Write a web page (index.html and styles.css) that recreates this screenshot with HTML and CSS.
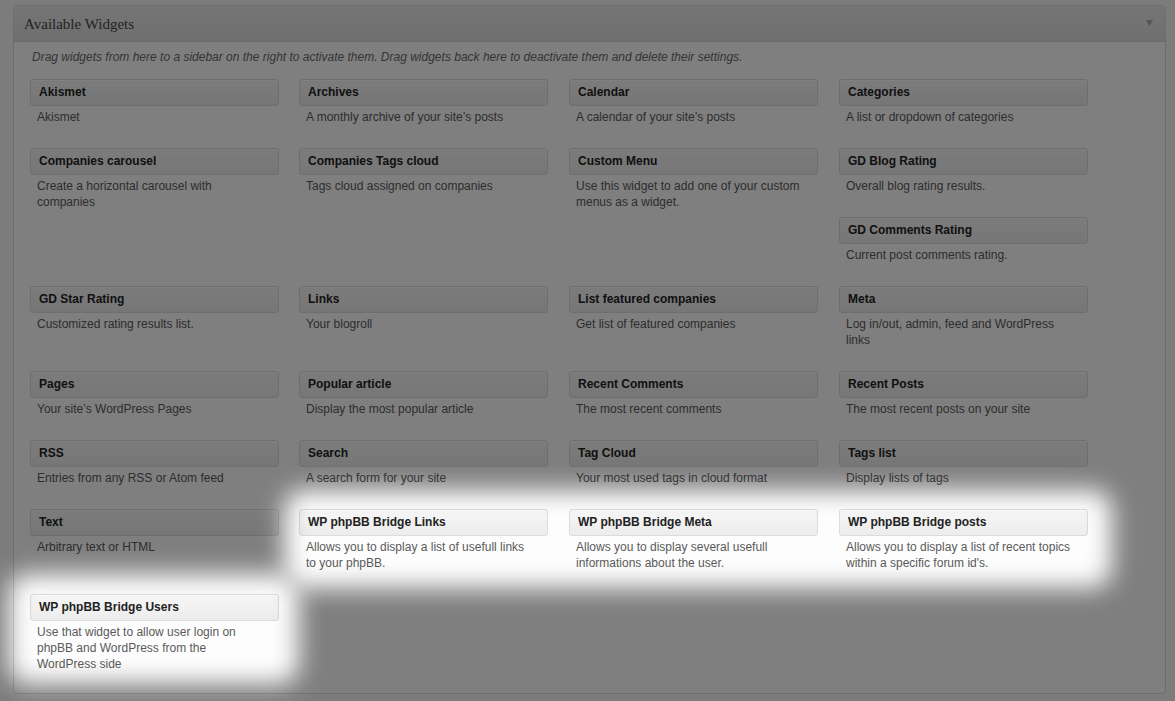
FILE: index.html
```html
<!DOCTYPE html>
<html>
<head>
<meta charset="utf-8">
<title>Widgets</title>
<link rel="stylesheet" href="styles.css">
</head>
<body>
<div class="page">
  <div class="panel">
    <div class="panel-head">
      <h3>Available Widgets</h3>
      <svg class="arrow" width="7" height="6" viewBox="0 0 7 6"><polygon points="0,0 7,0 3.5,6" fill="#a8a8a8"/></svg>
    </div>
    <div class="holder">
      <p class="intro">Drag widgets from here to a sidebar on the right to activate them. Drag widgets back here to deactivate them and delete their settings.</p>
      <div class="grid">
        <div class="widget"><div class="w-title">Akismet</div><div class="w-desc">Akismet</div></div>
        <div class="widget"><div class="w-title">Archives</div><div class="w-desc">A monthly archive of your site’s posts</div></div>
        <div class="widget"><div class="w-title">Calendar</div><div class="w-desc">A calendar of your site’s posts</div></div>
        <div class="widget"><div class="w-title">Categories</div><div class="w-desc">A list or dropdown of categories</div></div>

        <div class="widget"><div class="w-title">Companies carousel</div><div class="w-desc">Create a horizontal carousel with companies</div></div>
        <div class="widget"><div class="w-title">Companies Tags cloud</div><div class="w-desc">Tags cloud assigned on companies</div></div>
        <div class="widget"><div class="w-title">Custom Menu</div><div class="w-desc">Use this widget to add one of your custom menus as a widget.</div></div>
        <div class="stack">
          <div class="widget"><div class="w-title">GD Blog Rating</div><div class="w-desc">Overall blog rating results.</div></div>
          <div class="widget"><div class="w-title">GD Comments Rating</div><div class="w-desc">Current post comments rating.</div></div>
        </div>

        <div class="widget"><div class="w-title">GD Star Rating</div><div class="w-desc">Customized rating results list.</div></div>
        <div class="widget"><div class="w-title">Links</div><div class="w-desc">Your blogroll</div></div>
        <div class="widget"><div class="w-title">List featured companies</div><div class="w-desc">Get list of featured companies</div></div>
        <div class="widget"><div class="w-title">Meta</div><div class="w-desc">Log in/out, admin, feed and WordPress links</div></div>

        <div class="widget"><div class="w-title">Pages</div><div class="w-desc">Your site’s WordPress Pages</div></div>
        <div class="widget"><div class="w-title">Popular article</div><div class="w-desc">Display the most popular article</div></div>
        <div class="widget"><div class="w-title">Recent Comments</div><div class="w-desc">The most recent comments</div></div>
        <div class="widget"><div class="w-title">Recent Posts</div><div class="w-desc">The most recent posts on your site</div></div>

        <div class="widget"><div class="w-title">RSS</div><div class="w-desc">Entries from any RSS or Atom feed</div></div>
        <div class="widget"><div class="w-title">Search</div><div class="w-desc">A search form for your site</div></div>
        <div class="widget"><div class="w-title">Tag Cloud</div><div class="w-desc">Your most used tags in cloud format</div></div>
        <div class="widget"><div class="w-title">Tags list</div><div class="w-desc">Display lists of tags</div></div>

        <div class="widget"><div class="w-title">Text</div><div class="w-desc">Arbitrary text or HTML</div></div>
        <div class="widget"><div class="w-title">WP phpBB Bridge Links</div><div class="w-desc">Allows you to display a list of usefull links to your phpBB.</div></div>
        <div class="widget"><div class="w-title">WP phpBB Bridge Meta</div><div class="w-desc">Allows you to display several usefull informations about the user.</div></div>
        <div class="widget"><div class="w-title">WP phpBB Bridge posts</div><div class="w-desc">Allows you to display a list of recent topics within a specific forum id's.</div></div>

        <div class="widget"><div class="w-title">WP phpBB Bridge Users</div><div class="w-desc">Use that widget to allow user login on phpBB and WordPress from the WordPress side</div></div>
      </div>
    </div>
  </div>
</div>
<div class="overlay">
  <div class="spot spot-row"></div>
  <div class="spot spot-users"></div>
</div>
</body>
</html>
```

FILE: styles.css
```css
html, body {
  margin: 0;
  padding: 0;
  background: #f7f7f7;
  font-family: "Liberation Sans", Arial, sans-serif;
  font-size: 12px;
  color: #333;
  overflow: hidden;
}

.page {
  padding: 5px 9px 0 13px;
}

.panel {
  width: 1151px;
  border: 1px solid #dadada;
  border-radius: 4px;
  background: #fdfdfd;
  overflow: hidden;
}

.panel-head {
  height: 35px;
  display: flex;
  align-items: center;
  justify-content: space-between;
  padding: 0 10px 0 10px;
  background: linear-gradient(#eaeaea, #dedede);
  border-bottom: 1px solid #d4d4d4;
}

.panel-head h3 {
  margin: 0;
  font-family: "Liberation Serif", Georgia, serif;
  font-weight: normal;
  font-size: 15px;
  color: #464646;
  position: relative;
  top: 1px;
}

.arrow {
  margin-right: 2px;
  position: relative;
  top: -1px;
}

.holder {
  padding: 7px 16px 20px 16px;
}

.intro {
  margin: 0 0 14px 2px;
  font-style: italic;
  font-size: 12px;
  line-height: 16px;
  color: #6a6a6a;
}

.grid {
  display: grid;
  grid-template-columns: 249px 250px 250px 249px;
  column-gap: 20px;
  row-gap: 22px;
  align-items: start;
  justify-items: start;
}

.widget {
  width: 249px;
}

.stack {
  display: flex;
  flex-direction: column;
  gap: 22px;
}

.w-title {
  height: 25px;
  line-height: 25px;
  padding: 0 8px;
  border: 1px solid #dcdcdc;
  border-radius: 3px;
  background: linear-gradient(#f7f7f7, #ececec);
  box-shadow: inset 0 1px 0 #fff;
  font-weight: bold;
  font-size: 12px;
  color: #222;
  white-space: nowrap;
}

.w-desc {
  margin-top: 3px;
  padding: 0 0 1px 7px;
  width: 231px;
  line-height: 16px;
  color: #5a5a5a;
}

.overlay {
  position: fixed;
  inset: 0;
  background: #808080;
  mix-blend-mode: multiply;
  pointer-events: none;
}

.spot {
  position: absolute;
  background: #fff;
  border-radius: 20px;
  filter: blur(12px);
}

.spot-row {
  left: 284px;
  top: 490px;
  width: 828px;
  height: 98px;
}

.spot-users {
  left: 8px;
  top: 574px;
  width: 291px;
  height: 110px;
}
```
